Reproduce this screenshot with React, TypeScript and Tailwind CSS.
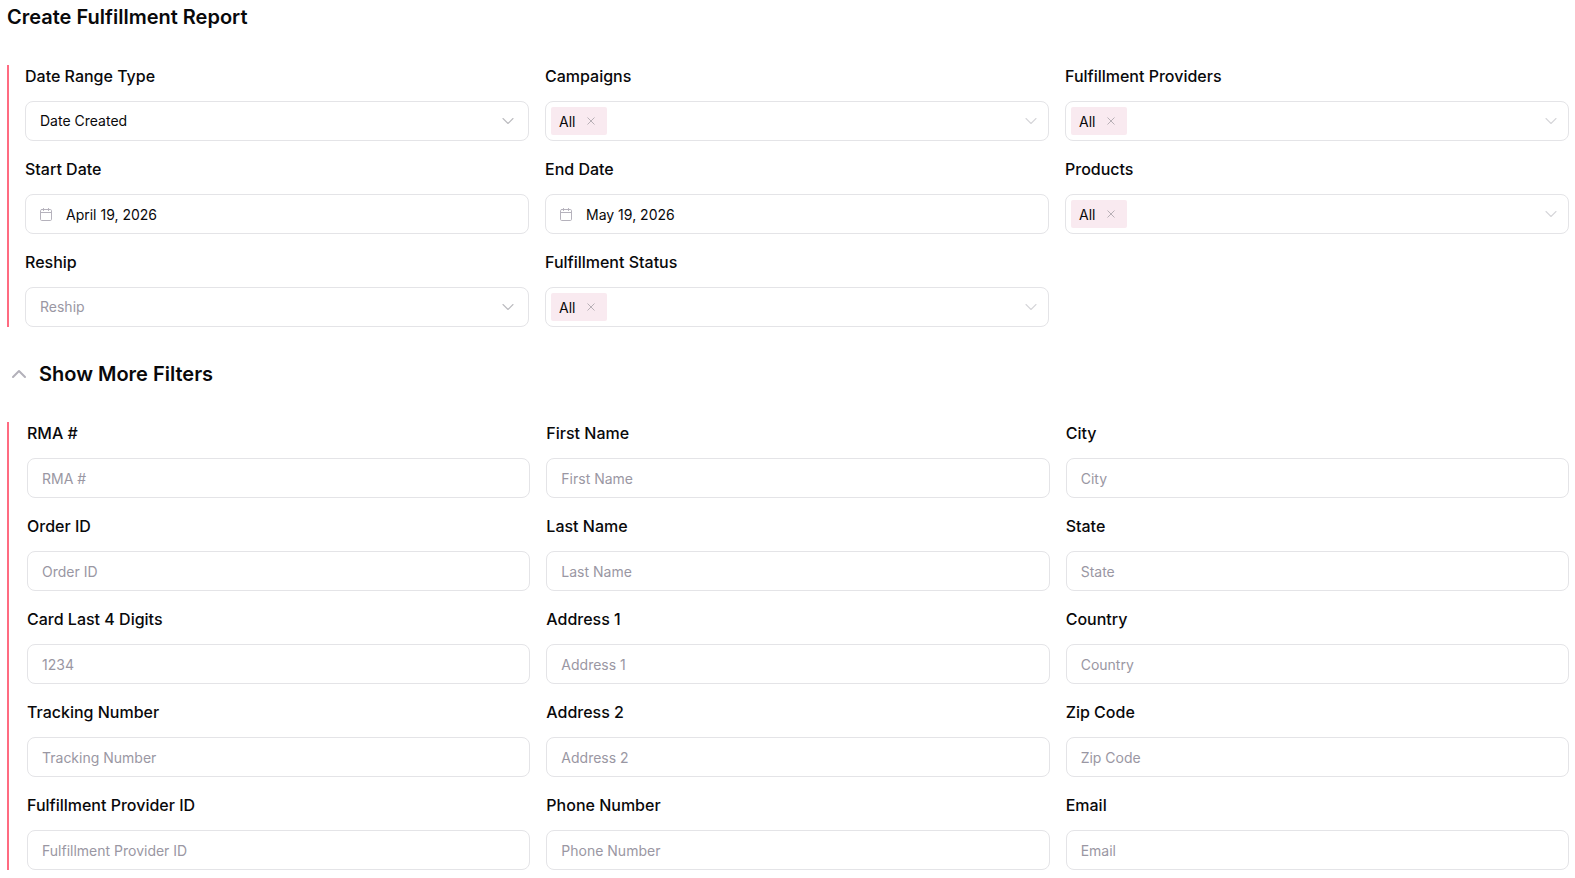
import { useId, useState } from "react";

const fieldClass = "flex flex-col gap-[14px]";
const labelClass = "text-base leading-[22px] font-medium text-[#09090b]";
const boxClass = "h-10 w-full rounded-lg border border-[#e4e4e7] bg-white text-sm";

function ChevronDown({ className }: { className: string }) {
  return (
    <svg
      aria-hidden="true"
      viewBox="0 0 12 8"
      className={className}
      fill="none"
      stroke="currentColor"
      strokeWidth="1.1"
      strokeLinecap="round"
      strokeLinejoin="round"
    >
      <path d="M1 1.5 6 6.5 11 1.5" />
    </svg>
  );
}

function CalendarIcon() {
  return (
    <svg
      aria-hidden="true"
      viewBox="0 0 12 13"
      className="h-[13px] w-3 shrink-0 text-[#b5b2bc]"
      fill="none"
      stroke="currentColor"
      strokeLinecap="round"
    >
      <rect x="0.5" y="1.5" width="11" height="11" rx="1.2" />
      <path d="M0.5 4.5H11.5M3.5 0.5V2.5M8.5 0.5V2.5" />
    </svg>
  );
}

function SelectField({ label, options, placeholder }: { label: string; options: string[]; placeholder?: string }) {
  const id = useId();
  const [value, setValue] = useState(placeholder ? "" : options[0]);
  return (
    <div className={fieldClass}>
      <label htmlFor={id} className={labelClass}>{label}</label>
      <div className="relative">
        <select
          id={id}
          value={value}
          onChange={(e) => setValue(e.target.value)}
          className={`${boxClass} block appearance-none px-3.5 ${value ? "text-[#09090b]" : "text-[#9a97a3]"}`}
        >
          {placeholder && <option value="">{placeholder}</option>}
          {options.map((o) => (
            <option key={o} value={o}>{o}</option>
          ))}
        </select>
        <ChevronDown className="pointer-events-none absolute top-4 right-[15px] h-2 w-3 text-[#bcbcc0]" />
      </div>
    </div>
  );
}

function MultiSelectField({ label }: { label: string }) {
  const id = useId();
  const [tags, setTags] = useState(["All"]);
  return (
    <div className={fieldClass}>
      <label htmlFor={id} className={labelClass}>{label}</label>
      <div className={`${boxClass} flex items-center pr-[11px] pl-[5px]`}>
        {tags.map((tag) => (
          <span key={tag} className="flex h-7 items-center gap-3 rounded-xs bg-[#f9eaf0] pr-3 pl-2 text-[#09090b]">
            <span className="pt-0.5">{tag}</span>
            <button
              type="button"
              aria-label={`Remove ${tag}`}
              onClick={() => setTags(tags.filter((t) => t !== tag))}
              className="text-[#b8b0b6]"
            >
              <svg aria-hidden="true" viewBox="0 0 8 8" className="size-2" fill="none" stroke="currentColor">
                <path d="M0.5 0.5 7.5 7.5M7.5 0.5 0.5 7.5" />
              </svg>
            </button>
          </span>
        ))}
        <input id={id} type="text" role="combobox" aria-expanded="false" className="min-w-0 flex-1 px-2 outline-none" />
        <ChevronDown className="h-2 w-3 shrink-0 text-[#d6d6da]" />
      </div>
    </div>
  );
}

function DateField({ label, date }: { label: string; date: string }) {
  const id = useId();
  return (
    <div className={fieldClass}>
      <label htmlFor={id} className={labelClass}>{label}</label>
      <div className={`${boxClass} flex items-center gap-3.5 px-3.5`}>
        <CalendarIcon />
        <input id={id} type="text" defaultValue={date} className="min-w-0 flex-1 pt-0.5 text-[#09090b] outline-none" />
      </div>
    </div>
  );
}

function TextField({ label, placeholder = label }: { label: string; placeholder?: string }) {
  const id = useId();
  return (
    <div className={fieldClass}>
      <label htmlFor={id} className={labelClass}>{label}</label>
      <input
        id={id}
        type="text"
        placeholder={placeholder}
        className={`${boxClass} px-3.5 text-[#09090b] placeholder:text-[#9a97a3]`}
      />
    </div>
  );
}

const moreFilters = [
  { label: "RMA #" },
  { label: "First Name" },
  { label: "City" },
  { label: "Order ID" },
  { label: "Last Name" },
  { label: "State" },
  { label: "Card Last 4 Digits", placeholder: "1234" },
  { label: "Address 1" },
  { label: "Country" },
  { label: "Tracking Number" },
  { label: "Address 2" },
  { label: "Zip Code" },
  { label: "Fulfillment Provider ID" },
  { label: "Phone Number" },
  { label: "Email" },
];

export default function App() {
  const [open, setOpen] = useState(true);
  return (
    <main className="bg-white pt-0.5 pr-1.5 pb-1.5 pl-[7px] font-['Inter',sans-serif] text-[#09090b]">
      <h1 className="text-xl leading-[30px] font-semibold">Create Fulfillment Report</h1>

      <form>
        <section className="mt-[33px] grid grid-cols-3 gap-x-4 gap-y-[17px] border-l-2 border-[#ff6b81] pl-4">
          <SelectField label="Date Range Type" options={["Date Created", "Date Shipped"]} />
          <MultiSelectField label="Campaigns" />
          <MultiSelectField label="Fulfillment Providers" />
          <DateField label="Start Date" date="April 19, 2026" />
          <DateField label="End Date" date="May 19, 2026" />
          <MultiSelectField label="Products" />
          <SelectField label="Reship" placeholder="Reship" options={["Yes", "No"]} />
          <MultiSelectField label="Fulfillment Status" />
        </section>

        <h2 className="mt-8 text-xl leading-[30px] font-semibold">
          <button
            type="button"
            aria-expanded={open}
            onClick={() => setOpen(!open)}
            className="flex items-center gap-3 pl-1"
          >
            <svg
              aria-hidden="true"
              viewBox="0 0 16 10"
              className={`h-2.5 w-4 text-[#b3b1ba] ${open ? "" : "rotate-180"}`}
              fill="none"
              stroke="currentColor"
              strokeWidth="2"
              strokeLinecap="round"
              strokeLinejoin="round"
            >
              <path d="M2 8 8 2 14 8" />
            </svg>
            Show More Filters
          </button>
        </h2>

        {open && (
          <section className="mt-[33px] grid grid-cols-3 gap-x-4 gap-y-[17px] border-l-2 border-[#ff6b81] pl-[18px]">
            {moreFilters.map((f) => (
              <TextField key={f.label} label={f.label} placeholder={f.placeholder} />
            ))}
          </section>
        )}
      </form>
    </main>
  );
}
